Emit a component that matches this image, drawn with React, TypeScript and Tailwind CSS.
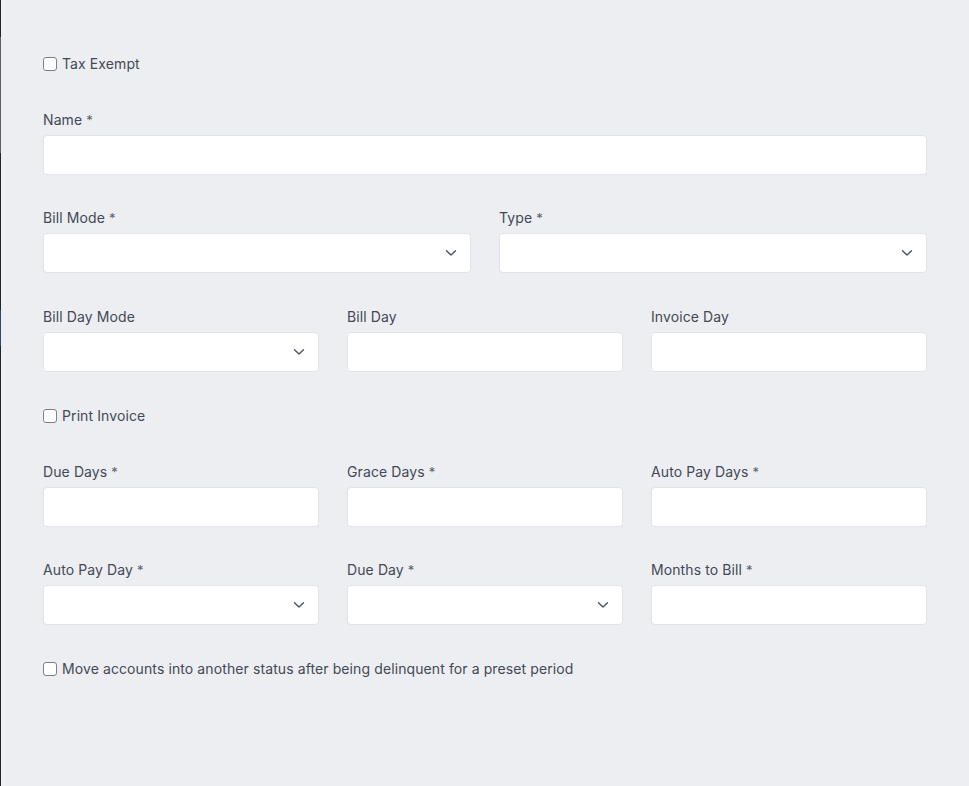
import React from "react";

function Chevron() {
  return (
    <svg width="12" height="8" viewBox="0 0 12 8" className="absolute right-[13px] top-1/2 -translate-y-1/2" fill="none">
      <path d="M1.5 1.8 L6 6 L10.5 1.8" stroke="#4b5563" strokeWidth="1.4" strokeLinecap="round" strokeLinejoin="round" />
    </svg>
  );
}

function Field({ label, required, select }: { label: string; required?: boolean; select?: boolean }) {
  return (
    <div className="flex flex-col">
      <div className="h-5 leading-5 text-[14px] tracking-[0.1px] text-[#424955]">
        {label}
        {required ? <span className="ml-[4px] text-[13px] text-[#5a616c]">*</span> : null}
      </div>
      <div className="relative mt-[5px] h-10 rounded-[4px] border border-[#e1e3e8] bg-white">
        {select ? <Chevron /> : null}
      </div>
    </div>
  );
}

function Check({ label }: { label: string }) {
  return (
    <label className="flex h-5 items-center text-[14px] tracking-[0.1px] text-[#424955]">
      <span className="h-[14px] w-[14px] rounded-[3px] border border-[#7b818a] bg-white" />
      <span className="ml-[5px] leading-5">{label}</span>
    </label>
  );
}

export default function App() {
  return (
    <div
      className="flex h-[786px] w-[969px] bg-[#edeef2]"
      style={{ fontFamily: "Inter, 'Noto Sans', sans-serif" }}
    >
      <div className="flex w-px flex-col">
        <div className="h-[37px] bg-[#1f2631]" />
        <div className="h-[116px] bg-[#5c6068]" />
        <div className="h-[157px] bg-[#1f2631]" />
        <div className="h-[36px] bg-[#2b4a64]" />
        <div className="flex-1 bg-[#1f2631]" />
      </div>
      <div className="flex-1 pl-[42px] pr-[42px] pt-[54px]">
        <Check label="Tax Exempt" />
        <div className="mt-[36px]">
          <Field label="Name" required />
        </div>
        <div className="mt-[33px] grid grid-cols-2 gap-x-[28px]">
          <Field label="Bill Mode" required select />
          <Field label="Type" required select />
        </div>
        <div className="mt-[34px] grid grid-cols-3 gap-x-[28px]">
          <Field label="Bill Day Mode" select />
          <Field label="Bill Day" />
          <Field label="Invoice Day" />
        </div>
        <div className="mt-[34px]">
          <Check label="Print Invoice" />
        </div>
        <div className="mt-[36px] grid grid-cols-3 gap-x-[28px]">
          <Field label="Due Days" required />
          <Field label="Grace Days" required />
          <Field label="Auto Pay Days" required />
        </div>
        <div className="mt-[33px] grid grid-cols-3 gap-x-[28px]">
          <Field label="Auto Pay Day" required select />
          <Field label="Due Day" required select />
          <Field label="Months to Bill" required />
        </div>
        <div className="mt-[34px]">
          <Check label="Move accounts into another status after being delinquent for a preset period" />
        </div>
      </div>
    </div>
  );
}
